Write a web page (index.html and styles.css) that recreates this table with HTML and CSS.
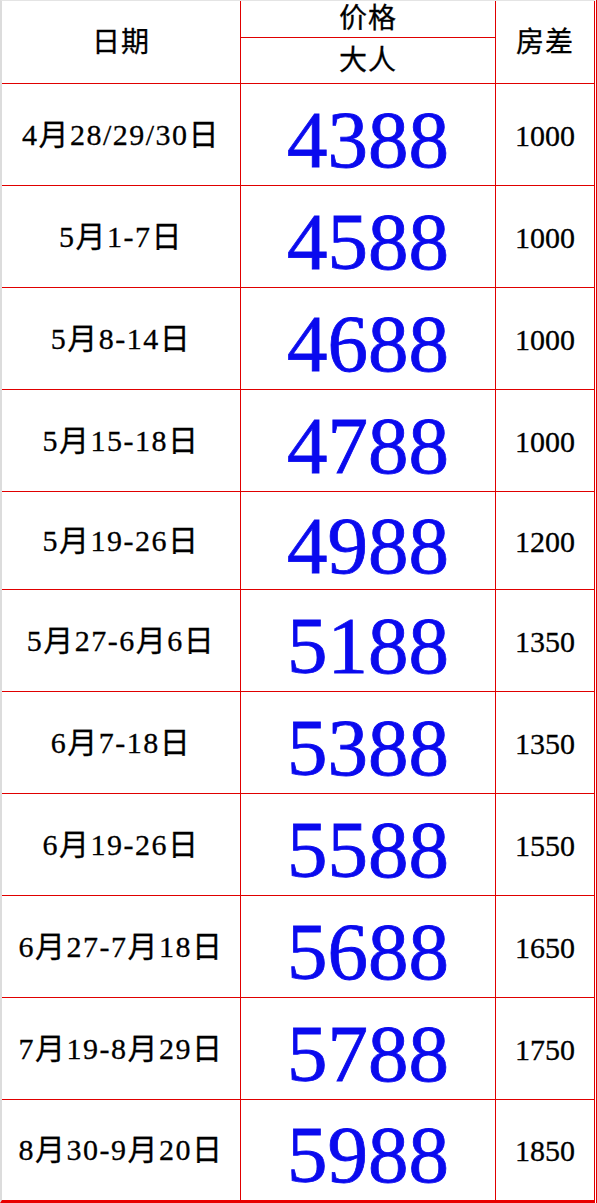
FILE: index.html
```html
<!DOCTYPE html>
<html lang="zh-CN">
<head>
<meta charset="utf-8">
<title>价格表</title>
<link rel="stylesheet" href="styles.css">
</head>
<body>
<div class="frame">
  <div class="sheet">
    <div class="cell head date-head">日期</div>
    <div class="cell head">价格</div>
    <div class="cell head diff-head">房差</div>
    <div class="cell head">大人</div>

    <div class="cell date">4月28/29/30日</div><div class="cell price">4388</div><div class="cell diff">1000</div>
    <div class="cell date">5月1-7日</div><div class="cell price">4588</div><div class="cell diff">1000</div>
    <div class="cell date">5月8-14日</div><div class="cell price">4688</div><div class="cell diff">1000</div>
    <div class="cell date">5月15-18日</div><div class="cell price">4788</div><div class="cell diff">1000</div>
    <div class="cell date">5月19-26日</div><div class="cell price">4988</div><div class="cell diff">1200</div>
    <div class="cell date">5月27-6月6日</div><div class="cell price">5188</div><div class="cell diff">1350</div>
    <div class="cell date">6月7-18日</div><div class="cell price">5388</div><div class="cell diff">1350</div>
    <div class="cell date">6月19-26日</div><div class="cell price">5588</div><div class="cell diff">1550</div>
    <div class="cell date">6月27-7月18日</div><div class="cell price">5688</div><div class="cell diff">1650</div>
    <div class="cell date">7月19-8月29日</div><div class="cell price">5788</div><div class="cell diff">1750</div>
    <div class="cell date">8月30-9月20日</div><div class="cell price">5988</div><div class="cell diff">1850</div>
  </div>
</div>
</body>
</html>
```

FILE: styles.css
```css
html, body {
  margin: 0;
  padding: 0;
  background: #ffffff;
}

.frame {
  width: 597px;
  box-sizing: border-box;
  padding-right: 1px;
  border-right: 1px solid #e00000;
  background: #ffffff;
}

.sheet {
  display: grid;
  grid-template-columns: 238px 254px 98px;
  grid-template-rows: 36px 45px 101px 101px 101px 101px 97px 101px 101px 101px 101px 101px 100px;
  gap: 1px;
  padding-right: 1px;
  background: #e00000;
  border-left: 2px solid #dcdcdc;
  border-top: 1px solid #e4e4e4;
  border-bottom: 3px solid #e80000;
  font-family: "Liberation Serif", "Noto Sans CJK SC", serif;
  color: #000000;
}

.cell {
  background: #ffffff;
  display: flex;
  align-items: center;
  justify-content: center;
  white-space: nowrap;
}

.head {
  font-size: 28px;
  line-height: 1;
  letter-spacing: 1px;
  -webkit-text-stroke: 0.3px #000000;
}

.date-head {
  grid-row: 1 / 3;
  grid-column: 1;
  padding-top: 2px;
}

.diff-head {
  grid-row: 1 / 3;
  grid-column: 3;
  padding-top: 2px;
}

.date {
  font-size: 30px;
  line-height: 1;
  letter-spacing: 1.5px;
  -webkit-text-stroke: 0.3px #000000;
}

.price {
  font-size: 81px;
  line-height: 1;
  color: #0a0aee;
  padding-top: 11px;
  box-sizing: border-box;
  -webkit-text-stroke: 0.8px #0a0aee;
}

.diff {
  font-size: 30px;
  line-height: 1;
  padding-top: 2px;
  -webkit-text-stroke: 0.3px #000000;
}
```
